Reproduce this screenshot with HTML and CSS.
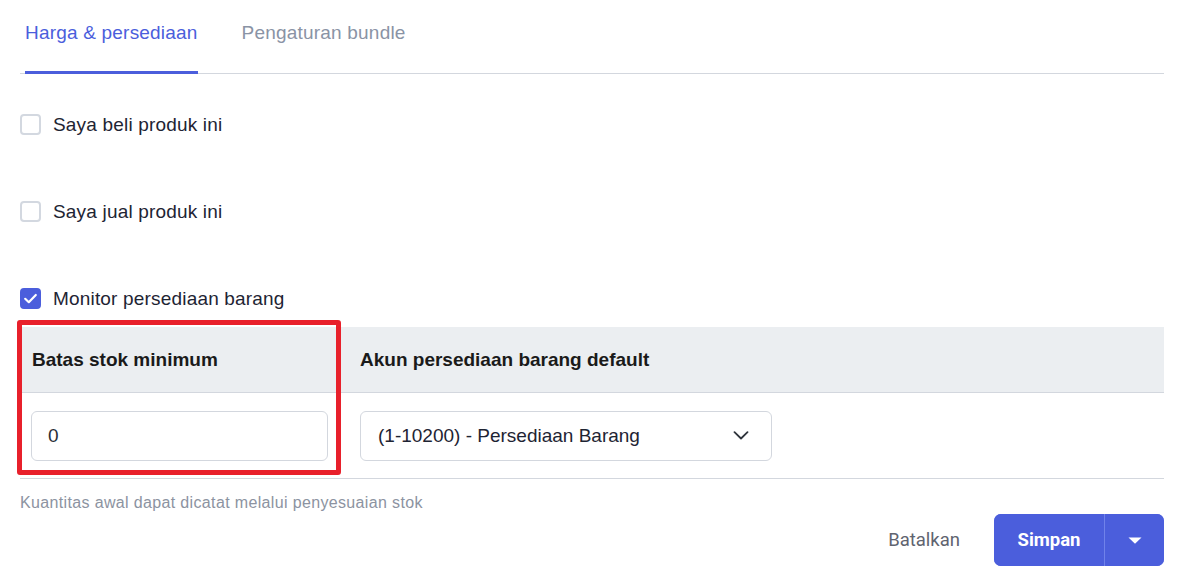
FILE: index.html
```html
<!DOCTYPE html>
<html lang="id">
<head>
<meta charset="utf-8">
<title>Harga &amp; persediaan</title>
<link rel="stylesheet" href="styles.css">
</head>
<body>
<div class="page">
  <nav class="tabs">
    <div class="tab active">Harga &amp; persediaan</div>
    <div class="tab">Pengaturan bundle</div>
  </nav>

  <div class="checks">
    <label class="check"><span class="box"></span><span>Saya beli produk ini</span></label>
    <label class="check"><span class="box"></span><span>Saya jual produk ini</span></label>
    <label class="check"><span class="box on"><svg viewBox="0 0 17 17" width="17" height="17"><path d="M3.2 8.8l3.6 3.4 7-7.2" fill="none" stroke="#fff" stroke-width="2.2" stroke-linecap="round" stroke-linejoin="round"/></svg></span><span>Monitor persediaan barang</span></label>
  </div>

  <div class="table-wrap">
    <div class="table">
      <div class="thead">
        <div class="th c1">Batas stok minimum</div>
        <div class="th c2">Akun persediaan barang default</div>
      </div>
      <div class="tbody">
        <div class="td c1"><div class="input">0</div></div>
        <div class="td c2">
          <div class="select">
            <span>(1-10200) - Persediaan Barang</span>
            <svg class="chev" viewBox="0 0 16 9" width="16" height="9"><path d="M1.5 1.2l6.5 6.3 6.5-6.3" fill="none" stroke="#2f343c" stroke-width="1.8" stroke-linecap="round" stroke-linejoin="round"/></svg>
          </div>
        </div>
      </div>
    </div>
    <div class="highlight"></div>
  </div>

  <p class="hint">Kuantitas awal dapat dicatat melalui penyesuaian stok</p>

  <div class="actions">
    <button class="btn-cancel">Batalkan</button>
    <div class="split">
      <button class="btn-save">Simpan</button>
      <button class="btn-caret"><svg viewBox="0 0 14 7" width="14" height="7"><path d="M0.5 0.5h13L7 6.8z" fill="#fff"/></svg></button>
    </div>
  </div>
</div>
</body>
</html>
```

FILE: styles.css
```css
* { box-sizing: border-box; }
html, body { margin: 0; background: #fff; }
body {
  font-family: "Liberation Sans", Arial, sans-serif;
  color: #1f2533;
}
.page {
  padding: 0 16px 0 20px;
}
.tabs {
  display: flex;
  gap: 44px;
  padding-left: 5px;
  border-bottom: 1px solid #d3d7de;
  height: 74px;
}
.tab {
  font-size: 19px;
  letter-spacing: 0.2px;
  line-height: 22px;
  padding-top: 22px;
  color: #8a93a5;
  height: 74px;
}
.tab.active {
  color: #4b5edc;
  border-bottom: 3px solid #4b5edc;
  margin-bottom: -1px;
}
.checks {
  display: flex;
  flex-direction: column;
  gap: 66px;
  margin-top: 40px;
}
.check {
  display: flex;
  align-items: center;
  gap: 12px;
  height: 21px;
  font-size: 19px;
  letter-spacing: 0.18px;
  color: #1e2433;
}
.box {
  width: 21px;
  height: 21px;
  border: 2px solid #d3d8e0;
  border-radius: 4px;
  display: flex;
  align-items: center;
  justify-content: center;
  background: #fff;
  flex: none;
}
.box.on {
  background: #4b5edc;
  border-color: #4b5edc;
}
.box svg { display: block; }
.table-wrap {
  position: relative;
  margin-top: 18px;
}
.table {
  border-bottom: 1px solid #d3d7de;
}
.thead {
  display: flex;
  height: 66px;
  background: #ebeef1;
  border-bottom: 1px solid #d3d7de;
  align-items: center;
}
.th {
  font-weight: bold;
  font-size: 19px;
  color: #1a1a1a;
}
.c1 { width: 320px; padding-left: 12px; padding-right: 12px; }
.c2 { padding-left: 20px; }
.tbody {
  display: flex;
  align-items: center;
  height: 85px;
}
.input {
  height: 50px;
  border: 1px solid #d3d7de;
  border-radius: 6px;
  padding-left: 16px;
  display: flex;
  align-items: center;
  font-size: 19px;
  color: #2a2f38;
  margin-left: -1px;
}
.select {
  width: 412px;
  height: 50px;
  border: 1px solid #d3d7de;
  border-radius: 6px;
  padding: 0 22px 0 17px;
  display: flex;
  align-items: center;
  justify-content: space-between;
  font-size: 19px;
  color: #1e2433;
}
.chev { display: block; }
.highlight {
  position: absolute;
  left: -3px;
  top: -7px;
  width: 324px;
  height: 155px;
  border: 5px solid #e8202b;
  border-radius: 3px;
  pointer-events: none;
}
.hint {
  margin: 15px 0 0;
  font-size: 16px;
  letter-spacing: 0.35px;
  line-height: 18px;
  color: #8c93a1;
}
.actions {
  display: flex;
  justify-content: flex-end;
  align-items: center;
  margin-top: 2px;
}
.btn-cancel {
  font-family: Roboto, "Liberation Sans", sans-serif;
  font-size: 18.5px;
  color: #5f6470;
  background: none;
  border: 0;
  height: 52px;
  padding: 0 24px;
  margin-right: 10px;
  cursor: pointer;
}
.split {
  display: flex;
  height: 52px;
  border-radius: 7px;
  overflow: hidden;
  background: #4b5edc;
}
.btn-save {
  font-family: Roboto, "Liberation Sans", sans-serif;
  font-weight: bold;
  font-size: 18.5px;
  color: #fff;
  background: #4b5edc;
  border: 0;
  width: 111px;
  height: 52px;
  border-right: 1px solid #7082ea;
  cursor: pointer;
}
.btn-caret {
  width: 59px;
  height: 52px;
  border: 0;
  background: #4b5edc;
  display: flex;
  align-items: center;
  justify-content: center;
  cursor: pointer;
}
.btn-caret svg { display: block; }
```
